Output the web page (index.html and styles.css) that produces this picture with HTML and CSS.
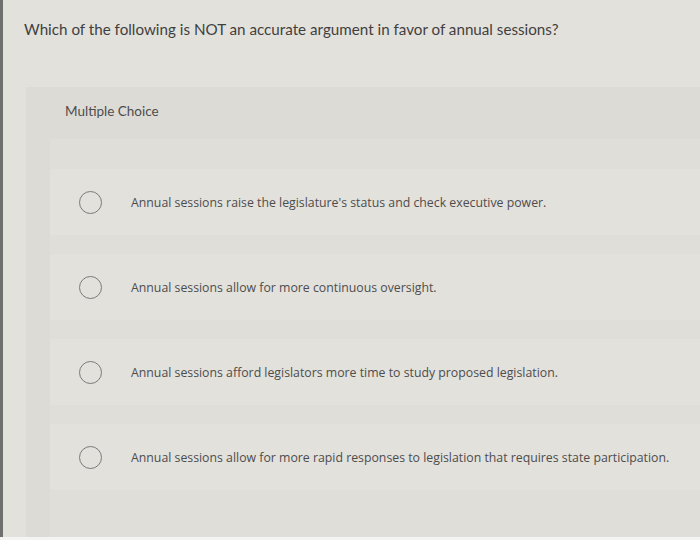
FILE: index.html
```html
<!DOCTYPE html>
<html>
<head>
<meta charset="utf-8">
<link rel="stylesheet" href="styles.css">
</head>
<body>
<div class="page">
  <p class="question">Which of the following is NOT an accurate argument in favor of annual sessions?</p>
  <div class="panel">
    <div class="header">Multiple Choice</div>
    <div class="choices">
      <div class="choice"><span class="radio"></span><span class="label">Annual sessions raise the legislature's status and check executive power.</span></div>
      <div class="choice"><span class="radio"></span><span class="label">Annual sessions allow for more continuous oversight.</span></div>
      <div class="choice"><span class="radio"></span><span class="label">Annual sessions afford legislators more time to study proposed legislation.</span></div>
      <div class="choice"><span class="radio"></span><span class="label">Annual sessions allow for more rapid responses to legislation that requires state participation.</span></div>
    </div>
  </div>
</div>
</body>
</html>
```
FILE: styles.css
```css
html, body {
  margin: 0;
  padding: 0;
  background: #f4f4f2;
}
.page {
  width: 697px;
  height: 537px;
  border-left: 3px solid #6f6f6f;
  background: #e3e1dc;
  font-family: Lato, "Open Sans", sans-serif;
  color: #4a4a4a;
  overflow: hidden;
}
.question {
  margin: 0;
  padding: 19px 0 0 21px;
  font-size: 15.2px;
  line-height: 20px;
  color: #3f3f3f;
}
.panel {
  margin: 48px 0 0 23px;
  background: #dddbd6;
  height: 460px;
  padding-left: 24px;
}
.header {
  height: 52px;
  padding: 16px 0 0 15px;
  box-sizing: border-box;
  font-size: 13.5px;
  color: #4d4d4d;
}
.choices {
  background: #e0ded9;
  height: 408px;
  padding-top: 30px;
  box-sizing: border-box;
}
.choice {
  display: flex;
  align-items: center;
  height: 66px;
  margin-bottom: 19px;
  background: #e3e1dc;
  padding-left: 29px;
}
.radio {
  width: 21px;
  height: 21px;
  border: 1.5px solid #7a7a7a;
  border-radius: 50%;
  flex: none;
}
.label {
  margin-left: 29px;
  font-family: "Open Sans", sans-serif;
  font-size: 12.3px;
  color: #4d4d4d;
}
```
